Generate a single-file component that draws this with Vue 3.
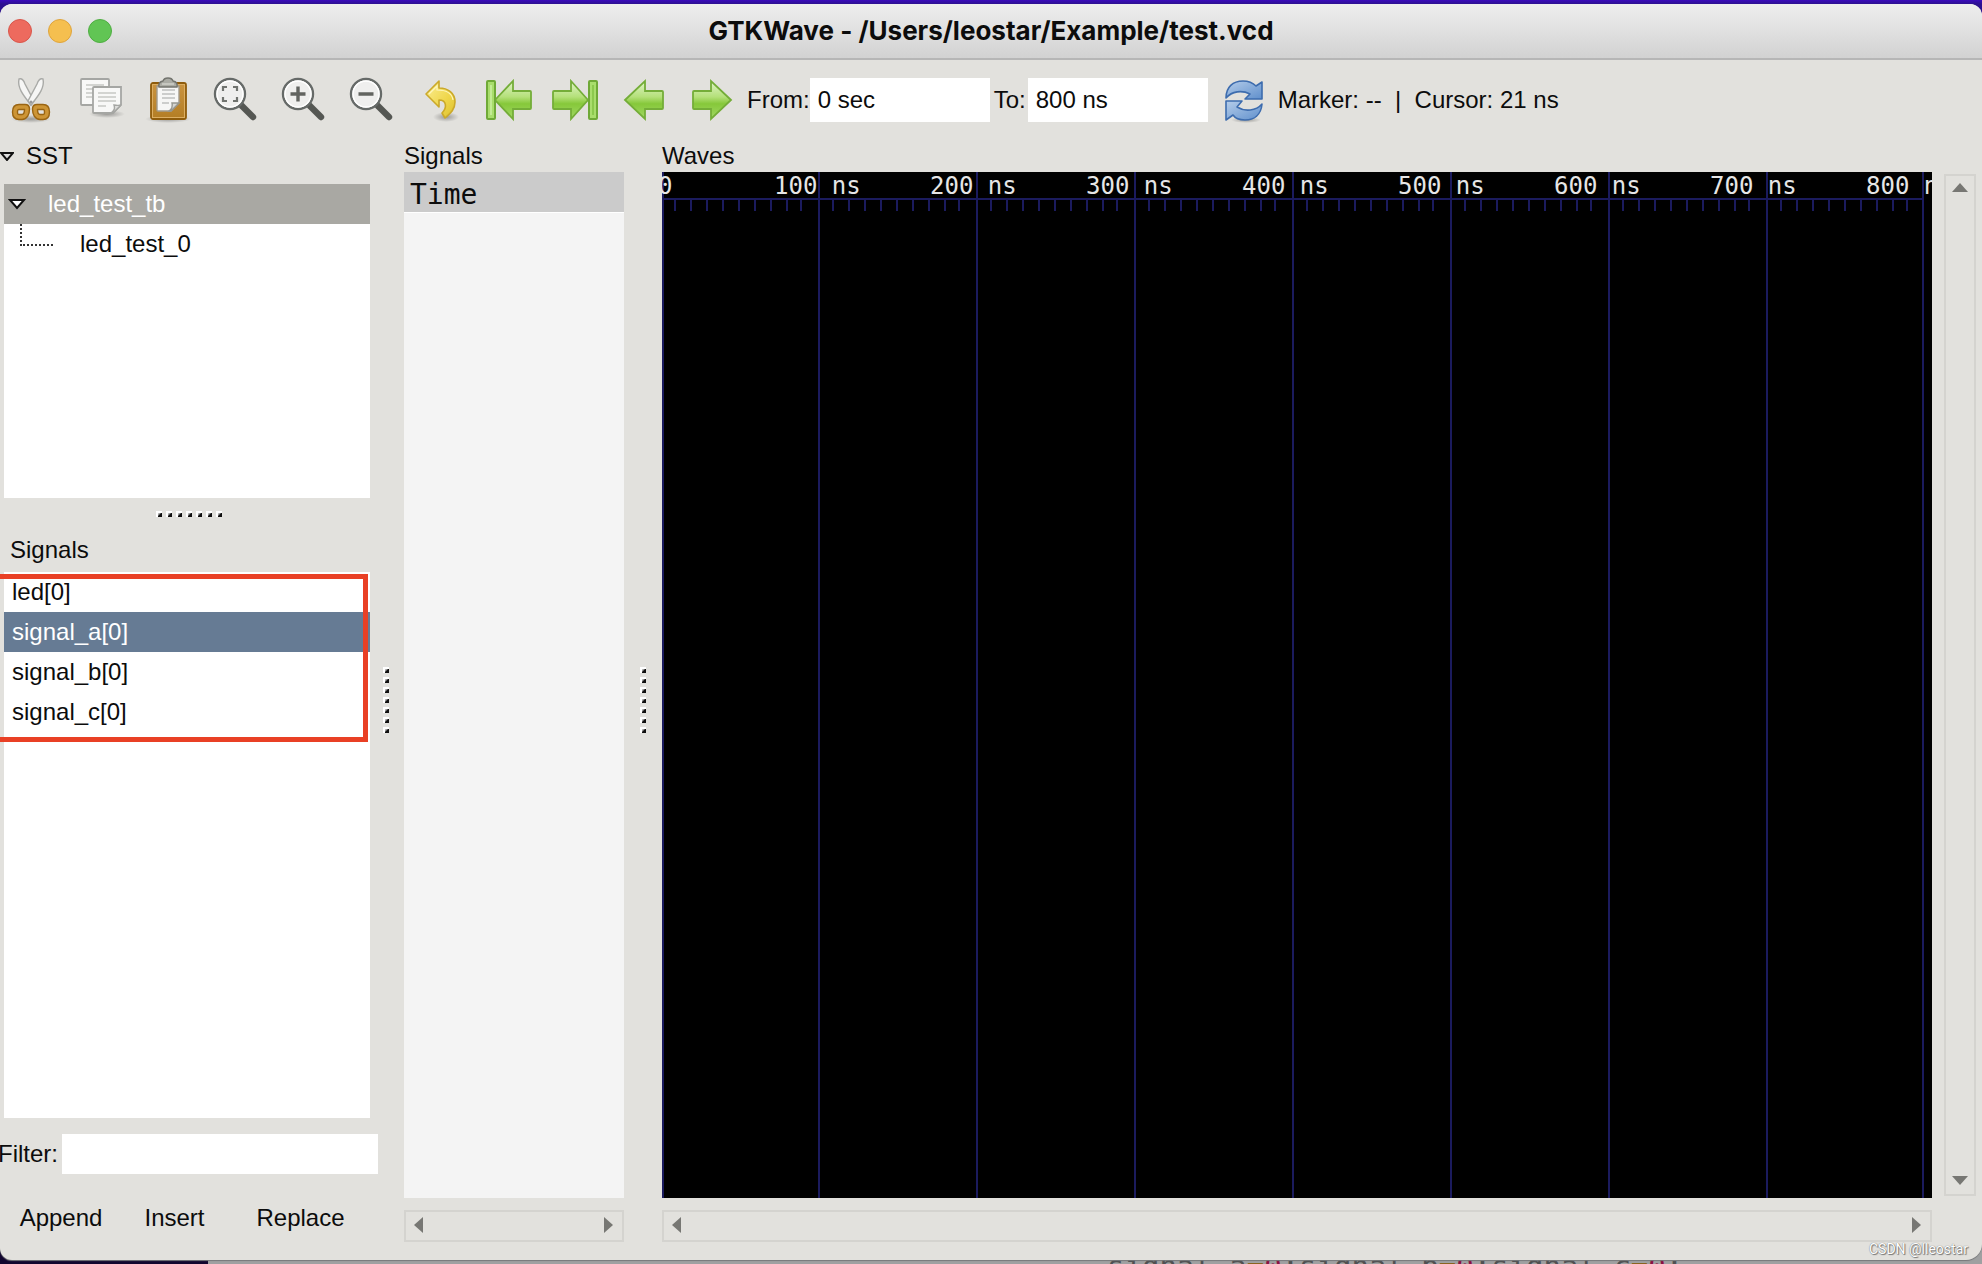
<script setup>
import { ref } from 'vue'

const from = ref('0 sec')
const to = ref('800 ns')
const filter = ref('')
const selected = ref('signal_a[0]')
const signals = ['led[0]', 'signal_a[0]', 'signal_b[0]', 'signal_c[0]']

// Timeline geometry of the wave canvas
const majors = [0, 156, 314, 472, 630, 788, 946, 1104, 1260]
const starts = [-2, 156, 314, 472, 630, 788, 946, 1104]
const offsets = [14, 30, 46, 62, 78, 94, 110, 126, 140]
const ticks = starts.flatMap((s) => offsets.map((o) => s + o))
const labels = [1, 2, 3, 4, 5, 6, 7, 8].map((n) => ({ x: 112 + (n - 1) * 156, text: `${n}00 ns` }))
const dots = 7
</script>

<template>
  <div class="desktop">
    <section class="window">
      <header class="titlebar">
        <div class="lights">
          <button class="light close" aria-label="Close"></button>
          <button class="light minimise" aria-label="Minimise"></button>
          <button class="light maximise" aria-label="Zoom"></button>
        </div>
        <h1>GTKWave - /Users/leostar/Example/test.vcd</h1>
      </header>

      <div class="toolbar">
        <svg class="defs" width="0" height="0" aria-hidden="true">
          <defs>
            <linearGradient id="green" x1="0" y1="0" x2="0" y2="1">
              <stop offset="0" stop-color="#e0f3c8" />
              <stop offset="0.42" stop-color="#b4e079" />
              <stop offset="0.6" stop-color="#86c83a" />
              <stop offset="1" stop-color="#a2d865" />
            </linearGradient>
            <linearGradient id="wood" x1="0" y1="0" x2="0" y2="1">
              <stop offset="0" stop-color="#cb9440" />
              <stop offset="1" stop-color="#b37d24" />
            </linearGradient>
            <linearGradient id="gold" x1="0" y1="0" x2="1" y2="1">
              <stop offset="0" stop-color="#fbee94" />
              <stop offset="0.6" stop-color="#efd64a" />
              <stop offset="1" stop-color="#dcc02e" />
            </linearGradient>
            <linearGradient id="blue" x1="0" y1="0" x2="1" y2="1">
              <stop offset="0" stop-color="#b5cdea" />
              <stop offset="1" stop-color="#5f8fcc" />
            </linearGradient>
            <radialGradient id="shade">
              <stop offset="0" stop-color="#000" stop-opacity="0.32" />
              <stop offset="1" stop-color="#000" stop-opacity="0" />
            </radialGradient>
          </defs>
        </svg>

        <div class="tools">
          <button class="tool" aria-label="Cut">
            <svg viewBox="0 0 48 48">
              <ellipse cx="24" cy="43" rx="20" ry="4" fill="url(#shade)" />
              <path d="M12 3c3-1 5 2 6 5l9 17-3 4C17 20 10 12 12 3z" fill="#f6f6f5" stroke="#a9aaa7" stroke-width="1.4" />
              <path d="M36 3c-3-1-5 2-6 5l-9 17 3 4C31 20 38 12 36 3z" fill="#f6f6f5" stroke="#a9aaa7" stroke-width="1.4" />
              <circle cx="24" cy="26" r="1.5" fill="#999" />
              <g fill="none" stroke="#9a6513" stroke-width="6.4">
                <path d="M12 31h6q2 0 2 2c0 5-2 8-5 8h-3q-4 0-4-5t4-5z" />
                <path d="M36 31h-6q-2 0-2 2c0 5 2 8 5 8h3q4 0 4-5t-4-5z" />
              </g>
              <g fill="none" stroke="#cd9536" stroke-width="3.6">
                <path d="M12 31h6q2 0 2 2c0 5-2 8-5 8h-3q-4 0-4-5t4-5z" />
                <path d="M36 31h-6q-2 0-2 2c0 5 2 8 5 8h3q4 0 4-5t-4-5z" />
              </g>
            </svg>
          </button>
          <button class="tool" aria-label="Copy">
            <svg viewBox="0 0 48 48">
              <ellipse cx="32" cy="38" rx="18" ry="4" fill="url(#shade)" />
              <rect x="6" y="3" width="28" height="26" rx="1" fill="#f8f8f7" stroke="#a5a6a3" stroke-width="1.8" />
              <path d="M11 9h18M11 13h18M11 17h8M11 21h6" stroke="#c6c7c5" stroke-width="1.6" />
              <path d="M19 11h27v18l-8 8H19q-1 0-1-1V12q0-1 1-1z" fill="#f8f8f7" stroke="#a5a6a3" stroke-width="1.8" />
              <path d="M23 17h18M23 21h18M23 25h18M23 30h8" stroke="#c6c7c5" stroke-width="1.6" />
              <path d="M46 29c-3 1-5 0-7 0 1 3 1 5-3 8h2z" fill="#dededc" stroke="#a5a6a3" stroke-width="1.4" />
            </svg>
          </button>
          <button class="tool" aria-label="Paste">
            <svg viewBox="0 0 48 48">
              <ellipse cx="25" cy="43" rx="23" ry="4" fill="url(#shade)" />
              <rect x="8" y="7" width="35" height="36" rx="2" fill="url(#wood)" stroke="#8f5c0c" stroke-width="1.8" />
              <rect x="9.5" y="8.5" width="32" height="33" fill="none" stroke="#dcae62" />
              <path d="M14 10h22v17l-8 8H15q-1 0-1-1z" fill="#f6f6f5" stroke="#a19a8c" stroke-width="1.4" />
              <path d="M19 14h13M19 18h13M19 22h13M19 27h7" stroke="#bfc0be" stroke-width="1.6" />
              <path d="M36 27h-7c1 4 0 6-3 8h2z" fill="#d5d5d2" stroke="#96968f" stroke-width="1.4" />
              <path d="M16 11q-1-5 4-6 1-3 5-3t5 3q5 1 4 6z" fill="#aaaba4" stroke="#73746e" stroke-width="1.4" />
              <path d="M19 8h12" stroke="#cfd0ca" stroke-width="1.5" />
            </svg>
          </button>
          <button v-for="kind in ['Fit', 'In', 'Out']" :key="kind" class="tool" :aria-label="'Zoom ' + kind">
            <svg viewBox="0 0 48 48">
              <path d="M31 30l11 11" stroke="#555753" stroke-width="6.4" stroke-linecap="round" />
              <circle cx="19" cy="18" r="15" fill="#efefee" stroke="#666a68" stroke-width="2.4" />
              <circle cx="19" cy="18" r="13" fill="none" stroke="#fff" stroke-width="1.4" />
              <path v-if="kind === 'Fit'" d="M12 15v-4h4M22 11h4v4M26 21v4h-4M16 25h-4v-4" fill="none" stroke="#70736f" stroke-width="2.2" />
              <path v-if="kind === 'In'" d="M19 10.5v15" stroke="#626460" stroke-width="3.4" />
              <path v-if="kind !== 'Fit'" d="M11.5 18h15" stroke="#626460" stroke-width="3.4" />
            </svg>
          </button>
          <button class="tool" aria-label="Undo zoom">
            <svg viewBox="0 0 48 48">
              <ellipse cx="31" cy="41" rx="13" ry="5" fill="url(#shade)" />
              <path d="M11 18L24 5v7c9 0 16 5 16 14 0 7-4 11-10 16l-3-5c5-5 5-13-3-13v7z" fill="url(#gold)" stroke="#cba92a" stroke-width="1.6" stroke-linejoin="round" />
              <path d="M14 18l8-8v4c9 0 15 3 16 10" fill="none" stroke="#fdf6bd" stroke-width="1.2" />
            </svg>
          </button>
          <button class="tool" aria-label="Go to start">
            <svg viewBox="0 0 48 48">
              <path d="M12 24L30 5v10h17q1 0 1 1v16q0 1-1 1H30v10z" fill="url(#green)" stroke="#74ad38" stroke-width="1.8" />
              <rect x="4" y="5" width="8" height="38" rx="1" fill="#a9dd6c" stroke="#6fa936" stroke-width="2" />
              <path d="M8 9v30" stroke="#c3eb94" stroke-width="2" />
            </svg>
          </button>
          <button class="tool" aria-label="Go to end">
            <svg viewBox="0 0 48 48">
              <path d="M37 24L20 5v10H3q-1 0-1 1v16q0 1 1 1h17v10z" fill="url(#green)" stroke="#74ad38" stroke-width="1.8" />
              <rect x="38" y="5" width="8" height="38" rx="1" fill="#a9dd6c" stroke="#6fa936" stroke-width="2" />
              <path d="M42 9v30" stroke="#8cc94d" stroke-width="2" />
            </svg>
          </button>
          <button class="tool" aria-label="Previous">
            <svg viewBox="0 0 48 48">
              <path d="M6 24L26 5v10h17q1 0 1 1v16q0 1-1 1H26v10z" fill="url(#green)" stroke="#74ad38" stroke-width="1.8" />
            </svg>
          </button>
          <button class="tool" aria-label="Next">
            <svg viewBox="0 0 48 48">
              <path d="M44 24L24 5v10H7q-1 0-1 1v16q0 1 1 1h17v10z" fill="url(#green)" stroke="#74ad38" stroke-width="1.8" />
            </svg>
          </button>
        </div>

        <label for="from" class="from">From:</label>
        <input id="from" v-model="from" type="text" class="time" />
        <label for="to" class="to">To:</label>
        <input id="to" v-model="to" type="text" class="time" />
        <button class="tool reload" aria-label="Reload">
          <svg viewBox="0 0 48 48">
            <ellipse cx="26" cy="44" rx="15" ry="3" fill="url(#shade)" />
            <g fill="url(#blue)" stroke="#3d6cae" stroke-width="1.6" stroke-linejoin="round">
              <path d="M6 22C6 11 13 5 23 5c6 0 10 2 13 5l6-4v17H25l5-5c-8-4-18-3-24 4z" />
              <path d="M42 28c-1 11-8 16-17 16-6 0-10-2-12-5l-7 5V25h16l-5 6c8 5 19 4 25-3z" />
            </g>
          </svg>
        </button>
        <output class="status">Marker: --&nbsp; |&nbsp; Cursor: 21 ns</output>
      </div>

      <main class="panes">
        <aside class="side">
          <div class="sst">
            <svg class="triangle" viewBox="0 0 14 10"><path d="M1 2h12L7 9z" fill="#ddd" stroke="#111" stroke-width="2" /></svg>
            <span>SST</span>
          </div>
          <ul class="tree">
            <li class="row root">
              <svg class="expander" viewBox="0 0 18 12"><path d="M2 2h14L9 10z" fill="#fff" stroke="#111" stroke-width="2" /></svg>
              led_test_tb
            </li>
            <li class="row child"><span class="branch"></span>led_test_0</li>
          </ul>
          <div class="grip horizontal"><i v-for="d in dots" :key="d"></i></div>
          <h2 class="list-title">Signals</h2>
          <div class="list">
            <ul>
              <li v-for="s in signals" :key="s" class="row" :class="{ active: s === selected }" @click="selected = s">{{ s }}</li>
            </ul>
            <div class="highlight"></div>
          </div>
          <div class="filter">
            <label for="filter">Filter:</label>
            <input id="filter" v-model="filter" type="text" />
          </div>
          <div class="actions">
            <button>Append</button>
            <button>Insert</button>
            <button>Replace</button>
          </div>
        </aside>

        <div class="grip vertical left"><i v-for="d in dots" :key="d"></i></div>

        <section class="names">
          <h2>Signals</h2>
          <div class="name-list"><div class="time-head">Time</div></div>
          <div class="scroll across">
            <button class="arrow west" aria-label="Scroll left"></button>
            <button class="arrow east" aria-label="Scroll right"></button>
          </div>
        </section>

        <div class="grip vertical right"><i v-for="d in dots" :key="d"></i></div>

        <section class="waves">
          <h2>Waves</h2>
          <div class="canvas">
            <svg width="100%" height="100%">
              <g fill="#1b1b5e">
                <rect v-for="x in majors" :key="'m' + x" :x="x" y="0" width="2" height="100%" />
                <rect x="0" y="26" width="1262" height="2" />
                <rect v-for="x in ticks" :key="'t' + x" :x="x" y="28" width="2" height="11" />
              </g>
              <g class="stamp">
                <text x="-4" y="22">0</text>
                <text v-for="l in labels" :key="l.x" :x="l.x" y="22">{{ l.text }}</text>
              </g>
            </svg>
          </div>
          <div class="scroll across">
            <button class="arrow west" aria-label="Scroll left"></button>
            <button class="arrow east" aria-label="Scroll right"></button>
          </div>
        </section>

        <div class="scroll down">
          <button class="arrow north" aria-label="Scroll up"></button>
          <button class="arrow south" aria-label="Scroll down"></button>
        </div>
      </main>
      <span class="watermark">CSDN @lleostar</span>
    </section>

    <div class="behind">
      <p>signal_a<b>=</b><em>0</em>;signal_b<b>=</b><em>0</em>;signal_c<b>=</b><em>0</em>;</p>
    </div>
  </div>
</template>

<style>
body {
  margin: 0;
}
</style>

<style scoped>
* {
  box-sizing: border-box;
}

.desktop {
  display: flex;
  flex-direction: column;
  min-height: 100vh;
  padding-top: 4px;
  overflow: hidden;
  background: linear-gradient(#3a0bbc, #2c1090 4px) top / 100% 16px no-repeat,
    linear-gradient(90deg, #12062f 208px, #9fa0a1 208px) bottom / 100% 30px no-repeat;
  color: #0c0c0c;
  font: 24px/32px "Liberation Sans", Arial, sans-serif;
}

.window {
  position: relative;
  display: flex;
  flex: 1;
  flex-direction: column;
  background: #e2e1dd;
  border-radius: 12px 12px 16px 12px;
  box-shadow: 0 1px 1px #77787a;
  overflow: hidden;
}

button {
  padding: 0;
  border: 0;
  background: none;
  color: inherit;
  font: inherit;
}

h1,
h2 {
  margin: 0;
  font: inherit;
}

ul {
  margin: 0;
  padding: 0;
  list-style: none;
}

.titlebar {
  display: grid;
  grid-template-columns: 1fr auto 1fr;
  align-items: center;
  height: 56px;
  padding: 0 8px;
  border-bottom: 2px solid #b6b6b6;
  background: linear-gradient(#eeeeee, #d2d2d2);
}

.titlebar h1 {
  font: bold 26px/32px Inter, sans-serif;
}

.lights {
  display: flex;
  gap: 16px;
}

.light {
  width: 24px;
  height: 24px;
  border: 1px solid #d9564b;
  border-radius: 50%;
  background: #ed6a5e;
}

.minimise {
  border-color: #dfa43c;
  background: #f5bf4f;
}

.maximise {
  border-color: #4fae42;
  background: #61c554;
}

.toolbar {
  display: flex;
  align-items: center;
  height: 80px;
  padding-left: 7px;
  white-space: nowrap;
}

.defs {
  position: absolute;
}

.tools {
  display: flex;
  gap: 20px;
}

.tool {
  width: 48px;
  height: 48px;
}

.tool svg {
  display: block;
  width: 48px;
  height: 48px;
  fill: none;
  overflow: visible;
}

.from {
  margin-left: 12px;
}

.to {
  margin: 0 2px 0 4px;
}

input {
  min-width: 0;
  padding: 0 8px;
  border: 0;
  background: #fff;
  color: inherit;
  font: inherit;
}

.time {
  width: 180px;
  height: 44px;
}

.reload {
  margin: 0 10px 0 12px;
}

.panes {
  display: flex;
  flex: 1;
}

.side {
  display: flex;
  flex-direction: column;
  width: 370px;
}

.sst {
  display: flex;
  align-items: center;
  gap: 12px;
  margin-bottom: 12px;
}

.triangle {
  width: 14px;
  height: 10px;
}

.tree,
.list {
  margin-left: 4px;
  background: #fff;
}

.tree {
  height: 314px;
}

.row {
  height: 40px;
  padding-left: 8px;
  line-height: 40px;
}

.root {
  display: flex;
  align-items: center;
  gap: 22px;
  padding-left: 4px;
  background: #a9a8a3;
  color: #fff;
}

.expander {
  width: 18px;
  height: 12px;
}

.child {
  display: flex;
  gap: 27px;
  padding-left: 16px;
}

.branch {
  width: 33px;
  height: 22px;
  border: dotted #333;
  border-width: 0 0 2px 2px;
}

.grip {
  display: flex;
  align-items: center;
  justify-content: center;
  gap: 4px;
}

.grip i {
  width: 6px;
  height: 6px;
  border: solid #fff;
  border-width: 2px 0 0 2px;
  background: linear-gradient(135deg, #bbb 20%, #111 50%);
}

.horizontal {
  height: 32px;
  padding-left: 8px;
}

.vertical {
  flex-direction: column;
}

.left {
  width: 34px;
  padding-right: 2px;
}

.right {
  width: 38px;
}

.list-title {
  padding-left: 10px;
  line-height: 40px;
  margin-bottom: 2px;
}

.list {
  position: relative;
  flex: 1;
}

.active {
  background: #667b94;
  color: #fff;
}

.highlight {
  position: absolute;
  top: 2px;
  right: 2px;
  left: -4px;
  height: 168px;
  border: 5px solid #e94025;
  border-left: 0;
  pointer-events: none;
}

.filter {
  display: flex;
  gap: 4px;
  height: 40px;
  margin: 16px -8px 0 -2px;
  line-height: 40px;
}

.filter input {
  flex: 1;
}

.actions {
  display: grid;
  grid-template-columns: 122px 105px 147px;
  height: 40px;
  margin: 24px -4px 22px 0;
}

.names,
.waves {
  display: flex;
  flex-direction: column;
  padding-bottom: 18px;
}

.names {
  width: 220px;
}

.waves {
  flex: 1;
  min-width: 0;
}

.name-list {
  flex: 1;
  background: #f4f4f4;
}

.time-head {
  height: 41px;
  padding: 6px 0 0 6px;
  border-bottom: 1px solid #fff;
  background: #cbcbcb;
  font: 28px/34px "DejaVu Sans Mono", monospace;
}

.canvas {
  position: relative;
  flex: 1;
  background: #000;
}

.canvas svg {
  position: absolute;
  inset: 0;
}

.stamp {
  fill: #e6e6e6;
  font: 24px "DejaVu Sans Mono", monospace;
}

.scroll {
  display: flex;
  align-items: center;
  justify-content: space-between;
  border: 2px solid #d4d3cf;
}

.across {
  height: 32px;
  margin-top: 12px;
  padding: 0 9px 2px 8px;
}

.down {
  flex-direction: column;
  width: 32px;
  margin: 34px 6px 64px 12px;
  padding: 7px 0 9px;
}

.arrow {
  background: #777773;
}

.west,
.east {
  width: 9px;
  height: 16px;
}

.north,
.south {
  width: 16px;
  height: 9px;
}

.west {
  clip-path: polygon(0 50%, 100% 0, 100% 100%);
}

.east {
  clip-path: polygon(0 0, 100% 50%, 0 100%);
}

.north {
  clip-path: polygon(50% 0, 100% 100%, 0 100%);
}

.south {
  clip-path: polygon(0 0, 100% 0, 50% 100%);
}

.watermark {
  position: absolute;
  right: 14px;
  bottom: 1px;
  color: #fff;
  font: 14px/20px Roboto, sans-serif;
  text-shadow: 0 0 1px #555, 1px 1px 1px #777;
}

.behind {
  height: 4px;
  padding-left: 1107px;
  overflow: hidden;
}

.behind p {
  margin: 0;
  color: #4f5051;
  font: 29px/12px "DejaVu Sans Mono", monospace;
  white-space: nowrap;
}

.behind b {
  color: #8a6420;
  font-weight: normal;
}

.behind em {
  color: #8c1040;
  font-style: normal;
}
</style>
